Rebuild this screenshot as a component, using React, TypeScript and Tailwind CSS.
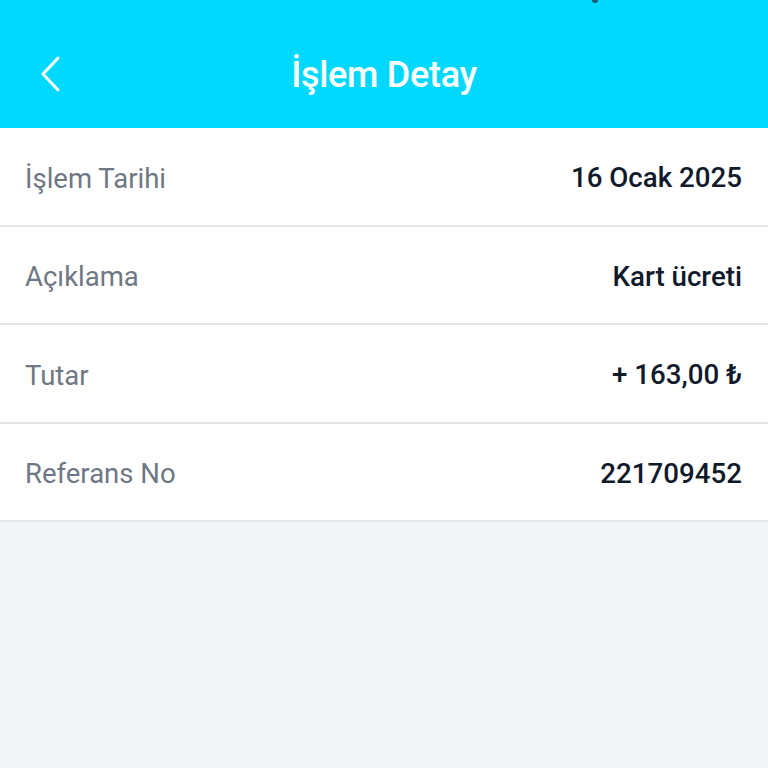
const rows = [
  { label: 'İşlem Tarihi', value: '16 Ocak 2025' },
  { label: 'Açıklama', value: 'Kart ücreti' },
  { label: 'Tutar', value: '+ 163,00 ₺' },
  { label: 'Referans No', value: '221709452' },
];

function BackIcon() {
  return (
    <svg width="22" height="36" viewBox="0 0 22 36" fill="none">
      <path d="M18 2 L3 18 L18 34" stroke="white" strokeWidth="3" strokeLinecap="round" strokeLinejoin="round" />
    </svg>
  );
}

export default function App() {
  return (
    <div className="min-h-[768px] bg-[#f3f4f6] font-['Roboto',sans-serif]">
      <header className="relative h-[128px] bg-[#00d8fe] flex items-center justify-center pt-[22px]">
        <div className="absolute left-[592px] top-0 h-[3px] w-[6px] rounded-b bg-[#1e5a6e]" />
        <button className="absolute left-[40px] top-[56px]">
          <BackIcon />
        </button>
        <h1 className="text-[36px] font-medium text-white tracking-[-0.3px]">İşlem Detay</h1>
      </header>
      <div className="bg-white">
        {rows.map((row) => (
          <div
            key={row.label}
            className="flex items-center justify-between h-[98.5px] pt-[4px] pl-[25px] pr-[26px] border-b-2 border-[#e4e6ea]"
          >
            <span className="text-[27.5px] text-[#6f7785]">{row.label}</span>
            <span className="text-[27.7px] font-medium text-[#101a2b]">{row.value}</span>
          </div>
        ))}
      </div>
    </div>
  );
}
